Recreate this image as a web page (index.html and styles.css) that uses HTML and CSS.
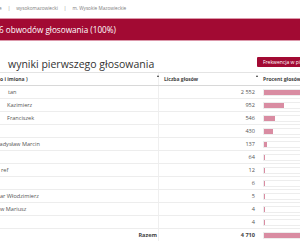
FILE: index.html
```html
<!DOCTYPE html>
<html lang="pl">
<head>
<meta charset="utf-8">
<link rel="stylesheet" href="styles.css">
</head>
<body>
<div class="page">
  <div class="crumbs"><span class="cut">e</span><span class="sep">|</span><span>wysokomazowiecki</span><span class="sep">|</span><span>m. Wysokie Mazowieckie</span></div>
  <div class="banner"><span class="banner-text">z 6 obwodów głosowania (100%)</span></div>
  <div class="head">
    <h1 class="title">wyniki pierwszego głosowania</h1>
    <span class="btn">Frekwencja w pierwszym głosowaniu</span>
  </div>
  <table class="results">
    <thead>
      <tr>
        <th class="c-name">o i imiona )</th>
        <th class="c-num"><span class="sort"></span>Liczba głosów</th>
        <th class="c-pct"><span class="sort"></span>Procent głosów</th>
      </tr>
    </thead>
    <tbody>
      <tr><td class="c-name"><span class="m8">tan</span></td><td class="c-num">2 552</td><td class="c-pct"><div class="track"><div class="fill" style="width:54.18%"></div></div></td></tr>
      <tr><td class="c-name"><span class="m7">Kazimierz</span></td><td class="c-num">952</td><td class="c-pct"><div class="track"><div class="fill" style="width:20.21%"></div></div></td></tr>
      <tr><td class="c-name"><span class="m7">Franciszek</span></td><td class="c-num">546</td><td class="c-pct"><div class="track"><div class="fill" style="width:11.59%"></div></div></td></tr>
      <tr><td class="c-name"></td><td class="c-num">430</td><td class="c-pct"><div class="track"><div class="fill" style="width:9.13%"></div></div></td></tr>
      <tr><td class="c-name"><span class="pull">Władysław Marcin</span></td><td class="c-num">137</td><td class="c-pct"><div class="track"><div class="fill" style="width:2.91%"></div></div></td></tr>
      <tr><td class="c-name"></td><td class="c-num">64</td><td class="c-pct"><div class="track"><div class="fill" style="width:1.36%"></div></div></td></tr>
      <tr><td class="c-name"><span class="m1">ref</span></td><td class="c-num">12</td><td class="c-pct"><div class="track"><div class="fill" style="width:0.25%"></div></div></td></tr>
      <tr><td class="c-name"></td><td class="c-num">6</td><td class="c-pct"><div class="track"><div class="fill" style="width:0.13%"></div></div></td></tr>
      <tr><td class="c-name">ar Włodzimierz</td><td class="c-num">5</td><td class="c-pct"><div class="track"><div class="fill" style="width:0.11%"></div></div></td></tr>
      <tr><td class="c-name">w Mariusz</td><td class="c-num">4</td><td class="c-pct"><div class="track"><div class="fill" style="width:0.08%"></div></div></td></tr>
      <tr><td class="c-name"></td><td class="c-num">4</td><td class="c-pct"><div class="track"><div class="fill" style="width:0.08%"></div></div></td></tr>
      <tr class="total"><td class="c-name">Razem</td><td class="c-num">4 710</td><td class="c-pct"><div class="track"><div class="fill" style="width:100%"></div></div></td></tr>
    </tbody>
  </table>
</div>
</body>
</html>
```

FILE: styles.css
```css
html, body {
  margin: 0;
  padding: 0;
  background: #ffffff;
  overflow: hidden;
}
body {
  font-family: "Open Sans", "DejaVu Sans", sans-serif;
  color: #555;
  width: 300px;
  height: 250px;
}
.page {
  width: 380px;
}
.crumbs {
  height: 18px;
  display: flex;
  align-items: center;
  font-size: 4.7px;
  color: #7d7d7d;
  padding-bottom: 2px;
  box-sizing: border-box;
  white-space: nowrap;
}
.crumbs .cut {
  margin-left: -1px;
}
.crumbs .sep {
  margin: 0 6px;
}
.banner {
  height: 23px;
  background: #a20a33;
  border-top: 1px solid #dc98ab;
  border-bottom: 1px solid #dc98ab;
  box-sizing: border-box;
  display: flex;
  align-items: center;
  white-space: nowrap;
  overflow: hidden;
}
.banner-text {
  color: #fff;
  font-size: 8.2px;
  margin-left: -7px;
}
.head {
  height: 31px;
  display: flex;
  align-items: flex-start;
  justify-content: space-between;
  padding-top: 16px;
  box-sizing: border-box;
}
.title {
  margin: 0 0 0 8px;
  font-size: 10.5px;
  font-weight: 400;
  color: #333;
  line-height: 14px;
  white-space: nowrap;
}
.btn {
  margin-left: auto;
  width: 123px;
  flex-shrink: 0;
  height: 10px;
  background: #a20a33;
  color: #fff;
  font-size: 5px;
  line-height: 10px;
  padding-left: 6px;
  box-sizing: border-box;
  white-space: nowrap;
  border-radius: 1px;
}
.results {
  width: 380px;
  border-collapse: collapse;
  table-layout: fixed;
  font-size: 5.6px;
}
.results th {
  height: 12px;
  font-size: 5px;
  font-weight: 700;
  color: #444;
  text-align: left;
  padding: 0;
  border-top: 1px solid #e4e4e4;
  border-bottom: 1px solid #d8d8d8;
  white-space: nowrap;
  position: relative;
}
.results td {
  height: 12px;
  padding: 0;
  border-bottom: 1px solid #ededed;
  white-space: nowrap;
  color: #555;
}
.c-name {
  width: 158px;
}
.c-num {
  width: 94px;
  border-left: 1px solid #efefef;
}
.results td.c-num {
  text-align: right;
  padding-right: 3px;
}
.results th.c-num,
.results th.c-pct {
  padding-left: 5px;
}
.c-pct {
  width: 128px;
}
.results td.c-pct {
  padding-left: 5px;
}
.sort {
  position: absolute;
  left: -2px;
  top: 2px;
  width: 0;
  height: 0;
  border-left: 1.5px solid transparent;
  border-right: 1.5px solid transparent;
  border-bottom: 2px solid #333;
}
.track {
  height: 7px;
  width: 99px;
  border: 1px solid #ededed;
  box-sizing: border-box;
  background: #fff;
}
.fill {
  height: 100%;
  background: #d98ca2;
  min-width: 1px;
}
.pull { margin-left: -7px; }
.m1 { margin-left: 1px; }
.m7 { margin-left: 7px; }
.m8 { margin-left: 8px; }
.total td {
  border-bottom: none;
}
.results .total td {
  font-weight: 700;
  color: #444;
}
.results .total td.c-name {
  text-align: right;
  padding-right: 1px;
}
```
